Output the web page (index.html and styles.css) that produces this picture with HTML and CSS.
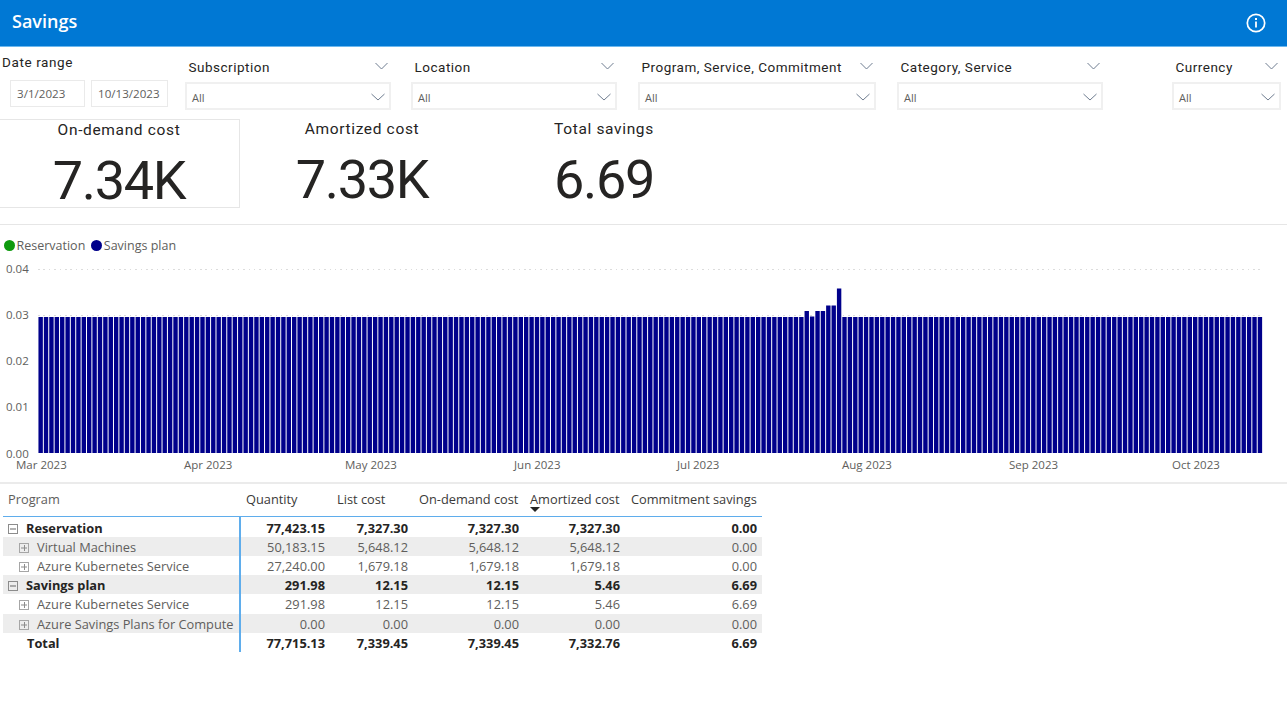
FILE: index.html
```html
<!DOCTYPE html>
<html lang="en">
<head>
<meta charset="utf-8">
<title>Savings</title>
<link rel="stylesheet" href="styles.css">
</head>
<body>
<header class="topbar">
  <h1>Savings</h1>
  <svg class="info" width="20" height="20" viewBox="0 0 20 20" fill="none" stroke="#fff"><circle cx="10" cy="10" r="8.7" stroke-width="1.7"/><path d="M10 8.6v6" stroke-width="1.8"/><path d="M10 5v2" stroke-width="2"/></svg>
</header>

<section class="filters">
  <div class="date-slicer">
    <div class="date-title">Date range</div>
    <div class="date-boxes"><div class="date-box d1">3/1/2023</div><div class="date-box d2">10/13/2023</div></div>
  </div>
  <div class="slicer s-sub">
    <div class="slicer-head"><span>Subscription</span><svg class="chev" width="13" height="8" viewBox="0 0 13 8"><path d="M.5 1l6 6 6-6"/></svg></div>
    <div class="slicer-box"><span>All</span><svg class="chev" width="14" height="8" viewBox="0 0 14 8"><path d="M.5 1L7 7l6.500-6"/></svg></div>
  </div>
  <div class="slicer s-loc">
    <div class="slicer-head"><span>Location</span><svg class="chev" width="13" height="8" viewBox="0 0 13 8"><path d="M.5 1l6 6 6-6"/></svg></div>
    <div class="slicer-box"><span>All</span><svg class="chev" width="14" height="8" viewBox="0 0 14 8"><path d="M.5 1L7 7l6.500-6"/></svg></div>
  </div>
  <div class="slicer s-prog">
    <div class="slicer-head"><span>Program, Service, Commitment</span><svg class="chev" width="13" height="8" viewBox="0 0 13 8"><path d="M.5 1l6 6 6-6"/></svg></div>
    <div class="slicer-box"><span>All</span><svg class="chev" width="14" height="8" viewBox="0 0 14 8"><path d="M.5 1L7 7l6.500-6"/></svg></div>
  </div>
  <div class="slicer s-cat">
    <div class="slicer-head"><span>Category, Service</span><svg class="chev" width="13" height="8" viewBox="0 0 13 8"><path d="M.5 1l6 6 6-6"/></svg></div>
    <div class="slicer-box"><span>All</span><svg class="chev" width="14" height="8" viewBox="0 0 14 8"><path d="M.5 1L7 7l6.500-6"/></svg></div>
  </div>
  <div class="slicer s-cur">
    <div class="slicer-head"><span>Currency</span><svg class="chev" width="13" height="8" viewBox="0 0 13 8"><path d="M.5 1l6 6 6-6"/></svg></div>
    <div class="slicer-box"><span>All</span><svg class="chev" width="14" height="8" viewBox="0 0 14 8"><path d="M.5 1L7 7l6.500-6"/></svg></div>
  </div>
</section>

<section class="kpis">
  <div class="kpi kpi-framed"><div class="kpi-label">On-demand cost</div><div class="kpi-value">7.34K</div></div>
  <div class="kpi"><div class="kpi-label">Amortized cost</div><div class="kpi-value">7.33K</div></div>
  <div class="kpi"><div class="kpi-label">Total savings</div><div class="kpi-value">6.69</div></div>
</section>

<section class="chart">
  <div class="legend">
    <span class="legend-item"><i class="dot green"></i>Reservation</span>
    <span class="legend-item"><i class="dot navy"></i>Savings plan</span>
  </div>
  <div class="plot">
    <div class="grid g4"></div>
    <div class="grid g3"></div>
    <span class="ylabel y4">0.04</span>
    <span class="ylabel y3">0.03</span>
    <span class="ylabel y2">0.02</span>
    <span class="ylabel y1">0.01</span>
    <span class="ylabel y0">0.00</span>
    <svg class="bars" id="bars" width="1225" height="184" viewBox="0 0 1225 184"></svg>
  </div>
  <div class="xaxis">
    <span class="tick" style="left:16px">Mar 2023</span>
    <span class="tick" style="left:184px">Apr 2023</span>
    <span class="tick" style="left:345px">May 2023</span>
    <span class="tick" style="left:514px">Jun 2023</span>
    <span class="tick" style="left:677px">Jul 2023</span>
    <span class="tick" style="left:842px">Aug 2023</span>
    <span class="tick" style="left:1009px">Sep 2023</span>
    <span class="tick" style="left:1172px">Oct 2023</span>
  </div>
</section>

<section class="matrix-wrap">
  <table class="matrix">
    <colgroup><col class="c0"><col class="c1"><col class="c2"><col class="c3"><col class="c4"><col class="c5"></colgroup>
    <thead>
      <tr>
        <th class="name">Program</th>
        <th class="h-qty">Quantity</th>
        <th class="h-list">List cost</th>
        <th>On-demand cost</th>
        <th class="sorted">Amortized cost<i class="sort"></i></th>
        <th>Commitment savings</th>
      </tr>
    </thead>
    <tbody>
      <tr class="group"><td class="name"><i class="tog minus"></i>Reservation</td><td>77,423.15</td><td>7,327.30</td><td>7,327.30</td><td>7,327.30</td><td>0.00</td></tr>
      <tr class="shade"><td class="name child"><i class="tog plus"></i>Virtual Machines</td><td>50,183.15</td><td>5,648.12</td><td>5,648.12</td><td>5,648.12</td><td>0.00</td></tr>
      <tr><td class="name child"><i class="tog plus"></i>Azure Kubernetes Service</td><td>27,240.00</td><td>1,679.18</td><td>1,679.18</td><td>1,679.18</td><td>0.00</td></tr>
      <tr class="group shade"><td class="name"><i class="tog minus"></i>Savings plan</td><td>291.98</td><td>12.15</td><td>12.15</td><td>5.46</td><td>6.69</td></tr>
      <tr class="tall"><td class="name child"><i class="tog plus"></i>Azure Kubernetes Service</td><td>291.98</td><td>12.15</td><td>12.15</td><td>5.46</td><td>6.69</td></tr>
      <tr class="shade"><td class="name child"><i class="tog plus"></i>Azure Savings Plans for Compute</td><td>0.00</td><td>0.00</td><td>0.00</td><td>0.00</td><td>0.00</td></tr>
      <tr class="group"><td class="name total">Total</td><td>77,715.13</td><td>7,339.45</td><td>7,339.45</td><td>7,332.76</td><td>6.69</td></tr>
    </tbody>
  </table>
</section>
<script src="bars.js"></script>
</body>
</html>
```
FILE: styles.css
```css
* { box-sizing: border-box; }
html, body { margin: 0; padding: 0; height: 723px; overflow: hidden; background: #fff; }
body { font-family: "Open Sans", "Noto Sans", sans-serif; color: #252423; }

.topbar {
  height: 47px;
  background: #0078d4;
  border-bottom: 1px solid #6cb8ee;
  display: flex;
  align-items: center;
  justify-content: space-between;
  padding: 0 21px 4px 12px;
}
.topbar h1 { margin: 0; font: 600 18px/24px "Open Sans", sans-serif; color: #fff; }
.info { display: block; margin-top: 3px; }

.filters { height: 72px; display: flex; align-items: flex-start; font-family: Roboto, sans-serif; }
.date-slicer { width: 185px; flex: none; padding: 6px 0 0 2px; }
.date-title { font-size: 13.500px; line-height: 18px; letter-spacing: .6px; color: #252423; }
.date-boxes { display: flex; gap: 6px; margin: 9px 0 0 8px; }
.date-box {
  height: 27px;
  border: 1px solid #eaeaea;
  font: 11.600px/25px "Open Sans", sans-serif;
  color: #605e5c;
  padding-left: 6px;
}
.d1 { width: 75px; }
.d2 { width: 77px; }

.slicer { flex: none; padding-top: 10px; }
.s-sub { width: 206px; }
.s-loc { width: 206px; margin-left: 20px; }
.s-prog { width: 238px; margin-left: 21px; }
.s-cat { width: 206px; margin-left: 21px; }
.s-cur { width: 109px; margin-left: 69px; }
.slicer-head {
  height: 25px;
  display: flex;
  justify-content: space-between;
  padding: 0 3px 0 3.500px;
  font-size: 13.500px;
  line-height: 20px;
  letter-spacing: .5px;
  color: #252423;
}
.slicer-head .chev { margin-top: 5px; }
.slicer-box {
  height: 28px;
  border: 2px solid #f0f0f0;
  display: flex;
  justify-content: space-between;
  align-items: center;
  padding: 4px 4px 0 5px;
  font: 11px/16px "Open Sans", sans-serif;
  color: #605e5c;
}
.slicer-box .chev { margin-top: -2px; }
.chev { display: block; fill: none; stroke: #6f7d90; stroke-width: 1; }

.kpis { height: 105px; display: flex; gap: 2px; margin-left: -2px; font-family: Roboto, sans-serif; }
.kpi { width: 240px; height: 89px; text-align: center; }
.kpi-framed { width: 242px; border: 1px solid #e6e6e6; }
.kpi-label { font-size: 15.500px; line-height: 20px; letter-spacing: .65px; color: #252423; }
.kpi-value { font-size: 54px; line-height: 64px; margin-top: 9px; letter-spacing: -1.300px; color: #252423; }

.chart { position: relative; height: 260px; border-top: 1px solid #e6e6e6; border-bottom: 2px solid #ebebeb; }
.legend { display: flex; gap: 6px; padding: 11px 0 0 4px; height: 44px; font-size: 12.500px; line-height: 18px; color: #605e5c; }
.legend-item { display: flex; align-items: center; gap: 1.500px; height: 19px; }
.dot { display: block; width: 11px; height: 11px; border-radius: 50%; }
.green { background: #0e9a0e; }
.navy { background: #00008b; }

.plot { position: relative; height: 184px; margin-left: 38px; margin-right: 24px; }
.grid {
  position: absolute;
  left: 0;
  right: 0;
  height: 1px;
  background: repeating-linear-gradient(90deg, #dcdcdc 0 1.500px, transparent 1.500px 5.400px);
}
.g4 { top: 0; }
.g3 { top: 46px; }
.ylabel { position: absolute; left: -32px; font-size: 11.500px; line-height: 11px; color: #605e5c; }
.y4 { top: -6px; }
.y3 { top: 40px; }
.y2 { top: 86px; }
.y1 { top: 132px; }
.y0 { top: 179px; }
.bars { position: absolute; left: 0; top: 0; display: block; }
.bars rect { fill: #00008b; }

.xaxis { position: absolute; left: 0; right: 0; top: 234px; height: 11px; }
.tick { position: absolute; top: 0; font-size: 11.500px; line-height: 11px; color: #605e5c; white-space: nowrap; }

.matrix-wrap { padding: 6px 0 0 3px; }
.matrix { border-collapse: separate; border-spacing: 0; table-layout: fixed; width: 759px; font-size: 12.800px; }
.c0 { width: 238px; }
.c1 { width: 89px; }
.c2 { width: 83px; }
.c3 { width: 111px; }
.c4 { width: 101px; }
.c5 { width: 137px; }
.matrix th {
  height: 27px;
  padding: 0 0 8px 6px;
  font-weight: 400;
  font-size: 12.800px;
  line-height: 18px;
  text-align: left;
  color: #3b3a39;
  border-bottom: 1px solid #5fadec;
  white-space: nowrap;
  position: relative;
}
.matrix th.name { padding-left: 5px; color: #605e5c; }
.matrix th.h-qty { padding-left: 5px; }
.matrix th.h-list { padding-left: 7px; }
.sort { position: absolute; left: 6px; bottom: 4px; border: 5px solid transparent; border-top-color: #252423; border-bottom: 0; }
.matrix td {
  height: 19px;
  padding: 1px 5px 0 0;
  line-height: 18px;
  text-align: right;
  color: #605e5c;
  white-space: nowrap;
  overflow: hidden;
}
.matrix tbody tr:first-child td { height: 20px; padding-top: 2px; }
.matrix tr.tall td { height: 20px; vertical-align: top; }
.matrix td.name { text-align: left; border-right: 2px solid #5fadec; padding-left: 5px; overflow: visible; }
.matrix td.child { padding-left: 16px; }
.matrix td.total { padding-left: 24px; }
.group td { font-weight: 700; color: #252423; }
.shade td { background: #ededed; }
.tog { display: inline-block; vertical-align: -1px; margin-right: 8px; width: 10px; height: 10px; border: 1px solid #a6a6a6; position: relative; }
.tog::before { content: ""; position: absolute; left: 1px; right: 1px; top: 3px; height: 2px; background: #8c8c8c; transform: scaleY(.5); }
.plus::after { content: ""; position: absolute; top: 1px; bottom: 1px; left: 3.500px; width: 1px; background: #8c8c8c; }
.group .tog { border-color: #8c8c8c; }
.group .tog::before { background: #666; }
```
FILE: bars.js
```js
var peaks = { 142: 142, 143: 136.5, 144: 142, 145: 142, 146: 147.5, 147: 147.5, 148: 164.5 };
var host = document.getElementById('bars');
var pitch = 5.395;
for (var i = 0; i < 227; i++) {
  var h = peaks[i] || 136;
  var r = document.createElementNS('http://www.w3.org/2000/svg', 'rect');
  r.setAttribute('x', (0.45 + i * pitch).toFixed(2));
  r.setAttribute('y', (184 - h).toFixed(1));
  r.setAttribute('width', '4.4');
  r.setAttribute('height', h);
  host.appendChild(r);
}
```
